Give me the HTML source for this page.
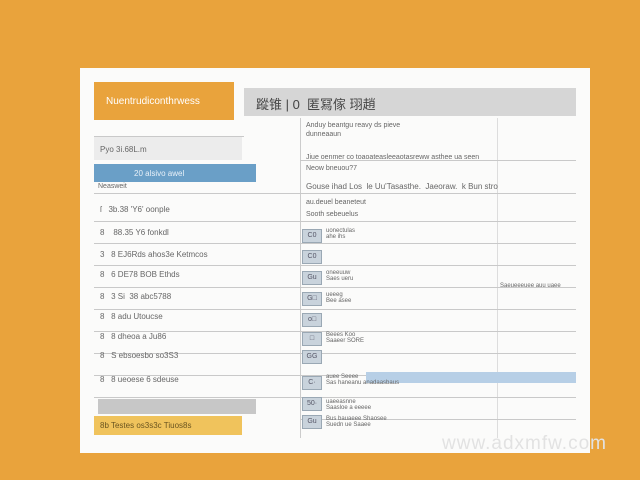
<!DOCTYPE html>
<html><head><meta charset="utf-8"><style>
*{margin:0;padding:0;box-sizing:border-box}
body{width:640px;height:480px;background:#e9a33c;position:relative;overflow:hidden;font-family:"Liberation Sans","Noto Sans CJK SC",sans-serif;color:#555}
.a{position:absolute}
.card{left:80px;top:68px;width:510px;height:385px;background:#fbfbfa}
.t{position:absolute;font-size:8px;color:#666;white-space:nowrap}
.hl{position:absolute;height:1px;background:#c9c9c9}
.ic{position:absolute;left:302px;width:20px;height:14px;background:#c9d3dc;border:1px solid #9aa8b4;font-size:7px;color:#556;text-align:center;line-height:12px}
</style></head><body>
<div class="a card"></div>
<div class="a" style="left:94px;top:82px;width:140px;height:38px;background:#e9a33c"></div>
<div class="t" style="left:106px;top:96px;color:#fff;font-size:10px">Nuentrudiconthrwess</div>
<div class="a" style="left:244px;top:88px;width:332px;height:28px;background:#d6d6d6"></div>
<div class="t" style="left:256px;top:94px;font-size:13px;color:#444">蹤锥 | 0 &nbsp;匿冩傢 珝趙</div>
<div class="a" style="left:94px;top:137px;width:148px;height:23px;background:#ececec"></div>
<div class="t" style="left:100px;top:145px">Pyo 3i.68L.m</div>
<div class="a" style="left:94px;top:164px;width:162px;height:18px;background:#6a9fc7"></div>
<div class="t" style="left:134px;top:169px;color:#e8f0f8">20 alsivo awel</div>
<div class="t" style="left:98px;top:183px;font-size:7px">Neasweit</div>
<div class="a" style="left:300px;top:118px;width:1px;height:320px;background:#ccc"></div>
<div class="a" style="left:497px;top:118px;width:1px;height:320px;background:#ddd"></div>
<div class="hl" style="left:94px;top:136px;width:150px"></div>
<div class="hl" style="left:300px;top:160px;width:276px"></div>
<div class="hl" style="left:94px;top:193px;width:482px"></div>
<div class="hl" style="left:94px;top:221px;width:482px"></div>
<div class="hl" style="left:94px;top:243px;width:482px"></div>
<div class="hl" style="left:94px;top:265px;width:482px"></div>
<div class="hl" style="left:94px;top:287px;width:482px"></div>
<div class="hl" style="left:94px;top:309px;width:482px"></div>
<div class="hl" style="left:94px;top:331px;width:482px"></div>
<div class="hl" style="left:94px;top:353px;width:482px"></div>
<div class="hl" style="left:94px;top:375px;width:482px"></div>
<div class="hl" style="left:94px;top:397px;width:482px"></div>
<div class="hl" style="left:300px;top:419px;width:276px"></div>
<div class="t" style="left:306px;top:122px;font-size:7px">Anduy beantgu reavy ds pieve</div>
<div class="t" style="left:306px;top:131px;font-size:7px">dunneaaun</div>
<div class="t" style="left:306px;top:154px;font-size:7px">Jiue oenmer co toaoateasleeaotasreww asthee ua seen</div>
<div class="t" style="left:306px;top:165px;font-size:7px">Neow bneuou?7</div>
<div class="t" style="left:306px;top:182px">Gouse ihad Los &nbsp;le Uu'Tasasthe. &nbsp;Jaeoraw. &nbsp;k Bun stro</div>
<div class="t" style="left:306px;top:199px;font-size:7px">au.deuel beaneteut</div>
<div class="t" style="left:306px;top:211px;font-size:7px">Sooth sebeuelus</div>
<div class="t" style="left:100px;top:205px">ſ &nbsp; 3b.38 'Y6' oonple</div>
<div class="t" style="left:100px;top:228px">8 &nbsp; &nbsp;88.35 Y6 fonkdl</div>
<div class="t" style="left:100px;top:250px">3 &nbsp; 8 EJ6Rds ahos3e Ketmcos</div>
<div class="t" style="left:100px;top:270px">8 &nbsp; 6 DE78 BOB Ethds</div>
<div class="t" style="left:100px;top:292px">8 &nbsp; 3 Si &nbsp;38 abc5788</div>
<div class="t" style="left:100px;top:312px">8 &nbsp; 8 adu Utoucse</div>
<div class="t" style="left:100px;top:332px">8 &nbsp; 8 dheoa a Ju86</div>
<div class="t" style="left:100px;top:351px">8 &nbsp; S ebsoesbo so3S3</div>
<div class="t" style="left:100px;top:375px">8 &nbsp; 8 ueoese 6 sdeuse</div>
<div class="ic" style="top:229px">C0</div>
<div class="ic" style="top:250px">C0</div>
<div class="ic" style="top:271px">Gu</div>
<div class="ic" style="top:292px">G□</div>
<div class="ic" style="top:313px">o□</div>
<div class="ic" style="top:332px">□</div>
<div class="ic" style="top:350px">GG</div>
<div class="ic" style="top:376px">C·</div>
<div class="ic" style="top:397px">50·</div>
<div class="ic" style="top:415px">Gu</div>
<div class="a" style="left:366px;top:372px;width:210px;height:11px;background:#b7cfe6"></div>
<div class="t" style="left:326px;top:228px;font-size:6px">uonectulas<br>ahe ihs</div>
<div class="t" style="left:326px;top:270px;font-size:6px">oneeuuw<br>Saes ueru</div>
<div class="t" style="left:326px;top:292px;font-size:6px">ueeeg<br>Bee asee</div>
<div class="t" style="left:326px;top:332px;font-size:6px">Beees Koo<br>Saaeer SORE</div>
<div class="t" style="left:326px;top:374px;font-size:6px">auee Seeee<br>Sas haneanu anadaasbaus</div>
<div class="t" style="left:326px;top:399px;font-size:6px">uaeeasnne<br>Saasloe a eeeee</div>
<div class="t" style="left:326px;top:416px;font-size:6px">Bus bauaeee Shaosee<br>Suedn ue Saaee</div>
<div class="t" style="left:500px;top:283px;font-size:6px">Saeueeeuee auu uaee</div>
<div class="a" style="left:98px;top:399px;width:158px;height:15px;background:#c7c7c7"></div>
<div class="a" style="left:94px;top:416px;width:148px;height:19px;background:#f0c35c"></div>
<div class="t" style="left:100px;top:421px;color:#6a5520">8b Testes os3s3c Tiuos8s</div>
<div class="t" style="left:442px;top:433px;font-size:19px;color:#e2e2e2;letter-spacing:1px">www.adxmfw.com</div>
</body></html>
